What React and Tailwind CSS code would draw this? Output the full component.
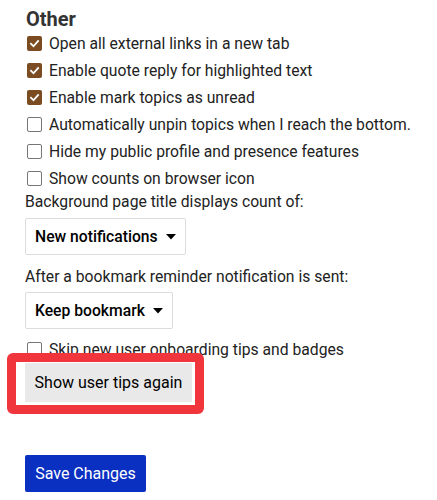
import React from "react";

const font = { fontFamily: "Roboto, 'Liberation Sans', sans-serif" };

function Box({ checked }) {
  if (checked) {
    return (
      <span className="flex h-[15px] w-[15px] shrink-0 items-center justify-center rounded-[2px] bg-[#7b4b22]">
        <svg width="11" height="11" viewBox="0 0 12 12">
          <path d="M2.2 6.3 L4.9 9 L9.9 3.3" fill="none" stroke="#fff" strokeWidth="2" strokeLinecap="square" />
        </svg>
      </span>
    );
  }
  return <span className="h-[15px] w-[15px] shrink-0 rounded-[2px] border border-[#767676] bg-white" />;
}

function Row({ checked, children }) {
  return (
    <div className="flex h-[27px] items-center gap-[7px] pl-[27px]">
      <Box checked={checked} />
      <span className="text-[15.7px] leading-[20px] text-[#222]">{children}</span>
    </div>
  );
}

function Select({ children, width }) {
  return (
    <div className={`ml-[25px] flex h-[37px] ${width} items-center justify-between rounded-[2px] border border-[#dcdcdc] bg-white pl-[9px] pr-[9px]`}>
      <span className="text-[15.7px] font-medium text-black">{children}</span>
      <svg width="10" height="6" viewBox="0 0 10 6">
        <path d="M0 0 L10 0 L5 5.5 Z" fill="#000" />
      </svg>
    </div>
  );
}

export default function App() {
  return (
    <div className="relative min-h-[500px] w-[437px] bg-white" style={font}>
      <div className="flex flex-col pt-[9px]">
        <h2 className="pl-[26px] text-[20px] font-bold leading-[21px] text-[#333]">Other</h2>
        <Row checked>Open all external links in a new tab</Row>
        <Row checked>Enable quote reply for highlighted text</Row>
        <Row checked>Enable mark topics as unread</Row>
        <Row>Automatically unpin topics when I reach the bottom.</Row>
        <Row>Hide my public profile and presence features</Row>
        <Row>Show counts on browser icon</Row>
        <div className="pl-[25px] text-[15.7px] leading-[20px] text-[#222]">Background page title displays count of:</div>
        <div className="mt-[6px]">
          <Select width="w-[161px]">New notifications</Select>
        </div>
        <div className="mt-[12px] pl-[25px] text-[15.7px] leading-[20px] text-[#222]">After a bookmark reminder notification is sent:</div>
        <div className="mt-[5px]">
          <Select width="w-[148px]">Keep bookmark</Select>
        </div>
        <div className="mt-[7px]">
          <Row>Skip new user onboarding tips and badges</Row>
        </div>
        <div className="pl-[25px]">
          <button className="flex h-[39px] w-[167px] items-center justify-center bg-[#e9e9e9] text-[16px] text-black">
            Show user tips again
          </button>
        </div>
        <div className="mt-[53px] pl-[25px]">
          <button className="flex h-[37px] w-[121px] items-center justify-center rounded-[2px] bg-[#0a30c2] text-[16px] text-white">
            Save Changes
          </button>
        </div>
      </div>
      <div className="absolute left-[7px] top-[353px] h-[61px] w-[197px] rounded-[6px] border-[9px] border-[#f0353d]" />
    </div>
  );
}
